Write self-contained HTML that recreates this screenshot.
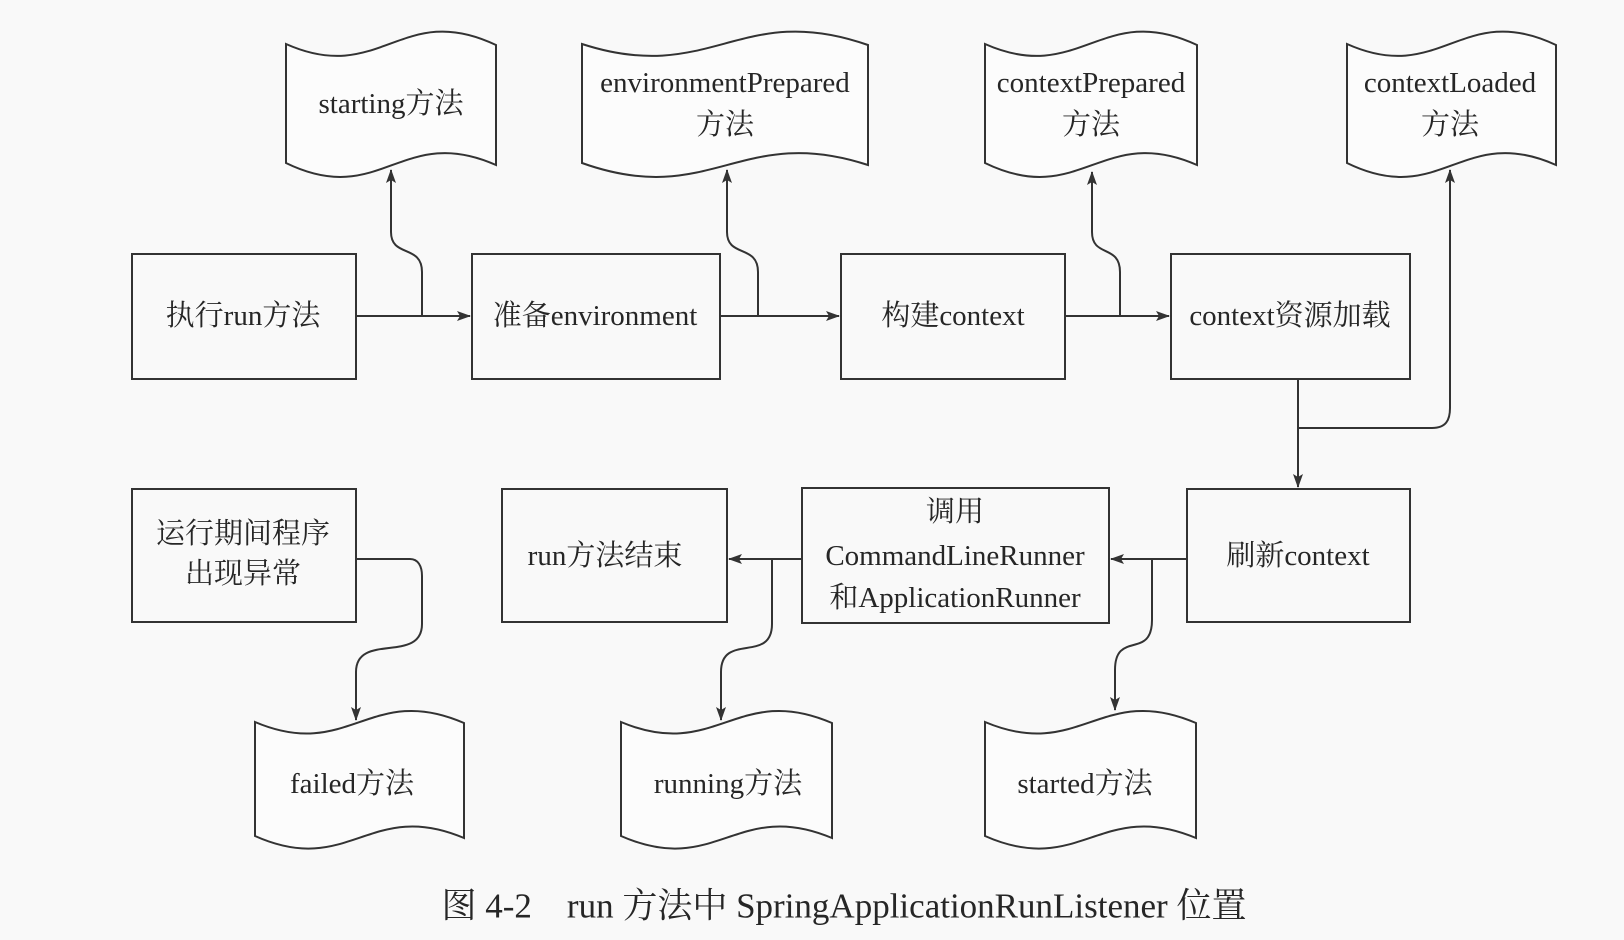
<!DOCTYPE html>
<html><head><meta charset="utf-8"><style>
html,body{margin:0;padding:0;background:#f9f9f9;}
svg{display:block;}
text{font-family:"Liberation Serif","Noto Serif CJK SC","Noto Sans CJK SC",serif;font-size:29px;fill:#262626;text-anchor:middle;dominant-baseline:central;}
.s{fill:none;stroke:#333;stroke-width:2;}
.d{fill:#fcfcfc;stroke:#333;stroke-width:2;}
</style></head><body>
<svg width="1624" height="940" viewBox="0 0 1624 940">
<defs>
<marker id="a" markerWidth="14" markerHeight="10" refX="13" refY="5" orient="auto" markerUnits="userSpaceOnUse">
<path d="M0,0 L14,5 L0,10 L3,5 Z" fill="#333"/>
</marker>
</defs>

<path class="d" d="M286,44 C380.5,86 401.5,0 496,45 L496,165 C401.5,123 380.5,209 286,163 Z"/>
<path class="d" d="M582,44 C711,86 740,0 868,45 L868,165 C740,123 711,209 582,163 Z"/>
<path class="d" d="M985,44 C1080,86 1102,0 1197,45 L1197,165 C1102,123 1080,209 985,163 Z"/>
<path class="d" d="M1347,44 C1441,86 1462,0 1556,45 L1556,165 C1462,123 1441,209 1347,163 Z"/>

<path class="d" d="M255,722 C349,762 370,682 464,723 L464,838 C370,798 349,878 255,836 Z"/>
<path class="d" d="M621,722 C716,762 737,682 832,723 L832,838 C737,798 716,878 621,836 Z"/>
<path class="d" d="M985,722 C1080,762 1101,682 1196,723 L1196,838 C1101,798 1080,878 985,836 Z"/>

<rect class="s" x="132" y="254" width="224" height="125"/>
<rect class="s" x="472" y="254" width="248" height="125"/>
<rect class="s" x="841" y="254" width="224" height="125"/>
<rect class="s" x="1171" y="254" width="239" height="125"/>
<rect class="s" x="132" y="489" width="224" height="133"/>
<rect class="s" x="502" y="489" width="225" height="133"/>
<rect class="s" x="802" y="488" width="307" height="135"/>
<rect class="s" x="1187" y="489" width="223" height="133"/>

<path class="s" d="M356,316 H470" marker-end="url(#a)"/>
<path class="s" d="M422,316 V272 C422,244 391,258 391,232 V170" marker-end="url(#a)"/>
<path class="s" d="M720,316 H839" marker-end="url(#a)"/>
<path class="s" d="M758,316 V272 C758,244 727,258 727,232 V170" marker-end="url(#a)"/>
<path class="s" d="M1065,316 H1169" marker-end="url(#a)"/>
<path class="s" d="M1120,316 V272 C1120,244 1092,258 1092,232 V172" marker-end="url(#a)"/>
<path class="s" d="M1298,379 V487" marker-end="url(#a)"/>
<path class="s" d="M1298,428 H1432 C1446,428 1450,420 1450,408 V170" marker-end="url(#a)"/>

<path class="s" d="M1187,559 H1111" marker-end="url(#a)"/>
<path class="s" d="M1152,559 V620 C1152,660 1115,630 1115,670 V710" marker-end="url(#a)"/>
<path class="s" d="M802,559 H729" marker-end="url(#a)"/>
<path class="s" d="M772,559 V624 C772,664 721,632 721,672 V720" marker-end="url(#a)"/>
<path class="s" d="M356,559 H410 C418,559 422,566 422,576 V624 C422,664 356,632 356,672 V720" marker-end="url(#a)"/>

<text x="391" y="104">starting方法</text>
<text x="725" y="83">environmentPrepared</text>
<text x="725" y="125">方法</text>
<text x="1091" y="83">contextPrepared</text>
<text x="1091" y="125">方法</text>
<text x="1450" y="83">contextLoaded</text>
<text x="1450" y="125">方法</text>

<text x="243" y="316">执行run方法</text>
<text x="595" y="316">准备environment</text>
<text x="953" y="316">构建context</text>
<text x="1290" y="316">context资源加载</text>

<text x="243" y="534">运行期间程序</text>
<text x="243" y="574">出现异常</text>
<text x="605" y="556">run方法结束</text>
<text x="955" y="512">调用</text>
<text x="955" y="556">CommandLineRunner</text>
<text x="955" y="598">和ApplicationRunner</text>
<text x="1298" y="556">刷新context</text>

<text x="352" y="784">failed方法</text>
<text x="728" y="784">running方法</text>
<text x="1085" y="784">started方法</text>

<text x="844" y="906" style="font-size:35px">图 4-2　run 方法中 SpringApplicationRunListener 位置</text>
</svg>
</body></html>
